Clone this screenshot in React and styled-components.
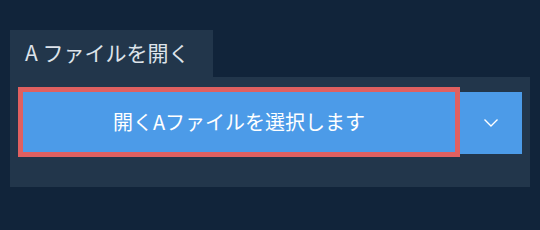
import React from "react";
import styled, { createGlobalStyle } from "styled-components";

const Global = createGlobalStyle`
  html, body { margin: 0; padding: 0; background: #11243a; }
  body { font-family: "Noto Sans CJK JP", "Noto Sans", sans-serif; }
`;

const Page = styled.div`
  width: 540px;
  height: 230px;
  box-sizing: border-box;
  padding: 30px 10px 0 10px;
  display: flex;
  flex-direction: column;
  align-items: flex-start;
`;

const Tab = styled.div`
  width: 203px;
  height: 47px;
  box-sizing: border-box;
  background: #22364b;
  color: #dde3ea;
  font-size: 21px;
  padding-left: 15px;
  padding-bottom: 4px;
  display: flex;
  align-items: center;
`;

const Panel = styled.div`
  width: 520px;
  height: 110px;
  box-sizing: border-box;
  background: #22364b;
  padding: 10px 8px 0 8px;
  display: flex;
  align-items: flex-start;
`;

const MainButton = styled.button`
  width: 442px;
  height: 70px;
  box-sizing: border-box;
  border: 5px solid #e06060;
  background: #4c9be8;
  color: #ffffff;
  font-family: inherit;
  font-size: 20px;
  display: flex;
  align-items: center;
  justify-content: center;
  padding: 0 0 2px 0;
  margin: 0;
`;

const DropButton = styled.button`
  width: 62px;
  height: 62px;
  margin-top: 5px;
  border: none;
  background: #4c9be8;
  display: flex;
  align-items: center;
  justify-content: center;
  padding: 0;
`;

export default function App() {
  return (
    <>
      <Global />
      <Page>
        <Tab>A ファイルを開く</Tab>
        <Panel>
          <MainButton>開くAファイルを選択します</MainButton>
          <DropButton>
            <svg width="16" height="10" viewBox="0 0 16 10" fill="none">
              <path d="M1.5 1.5 L8 8 L14.5 1.5" stroke="#ffffff" strokeWidth="1.4" />
            </svg>
          </DropButton>
        </Panel>
      </Page>
    </>
  );
}
